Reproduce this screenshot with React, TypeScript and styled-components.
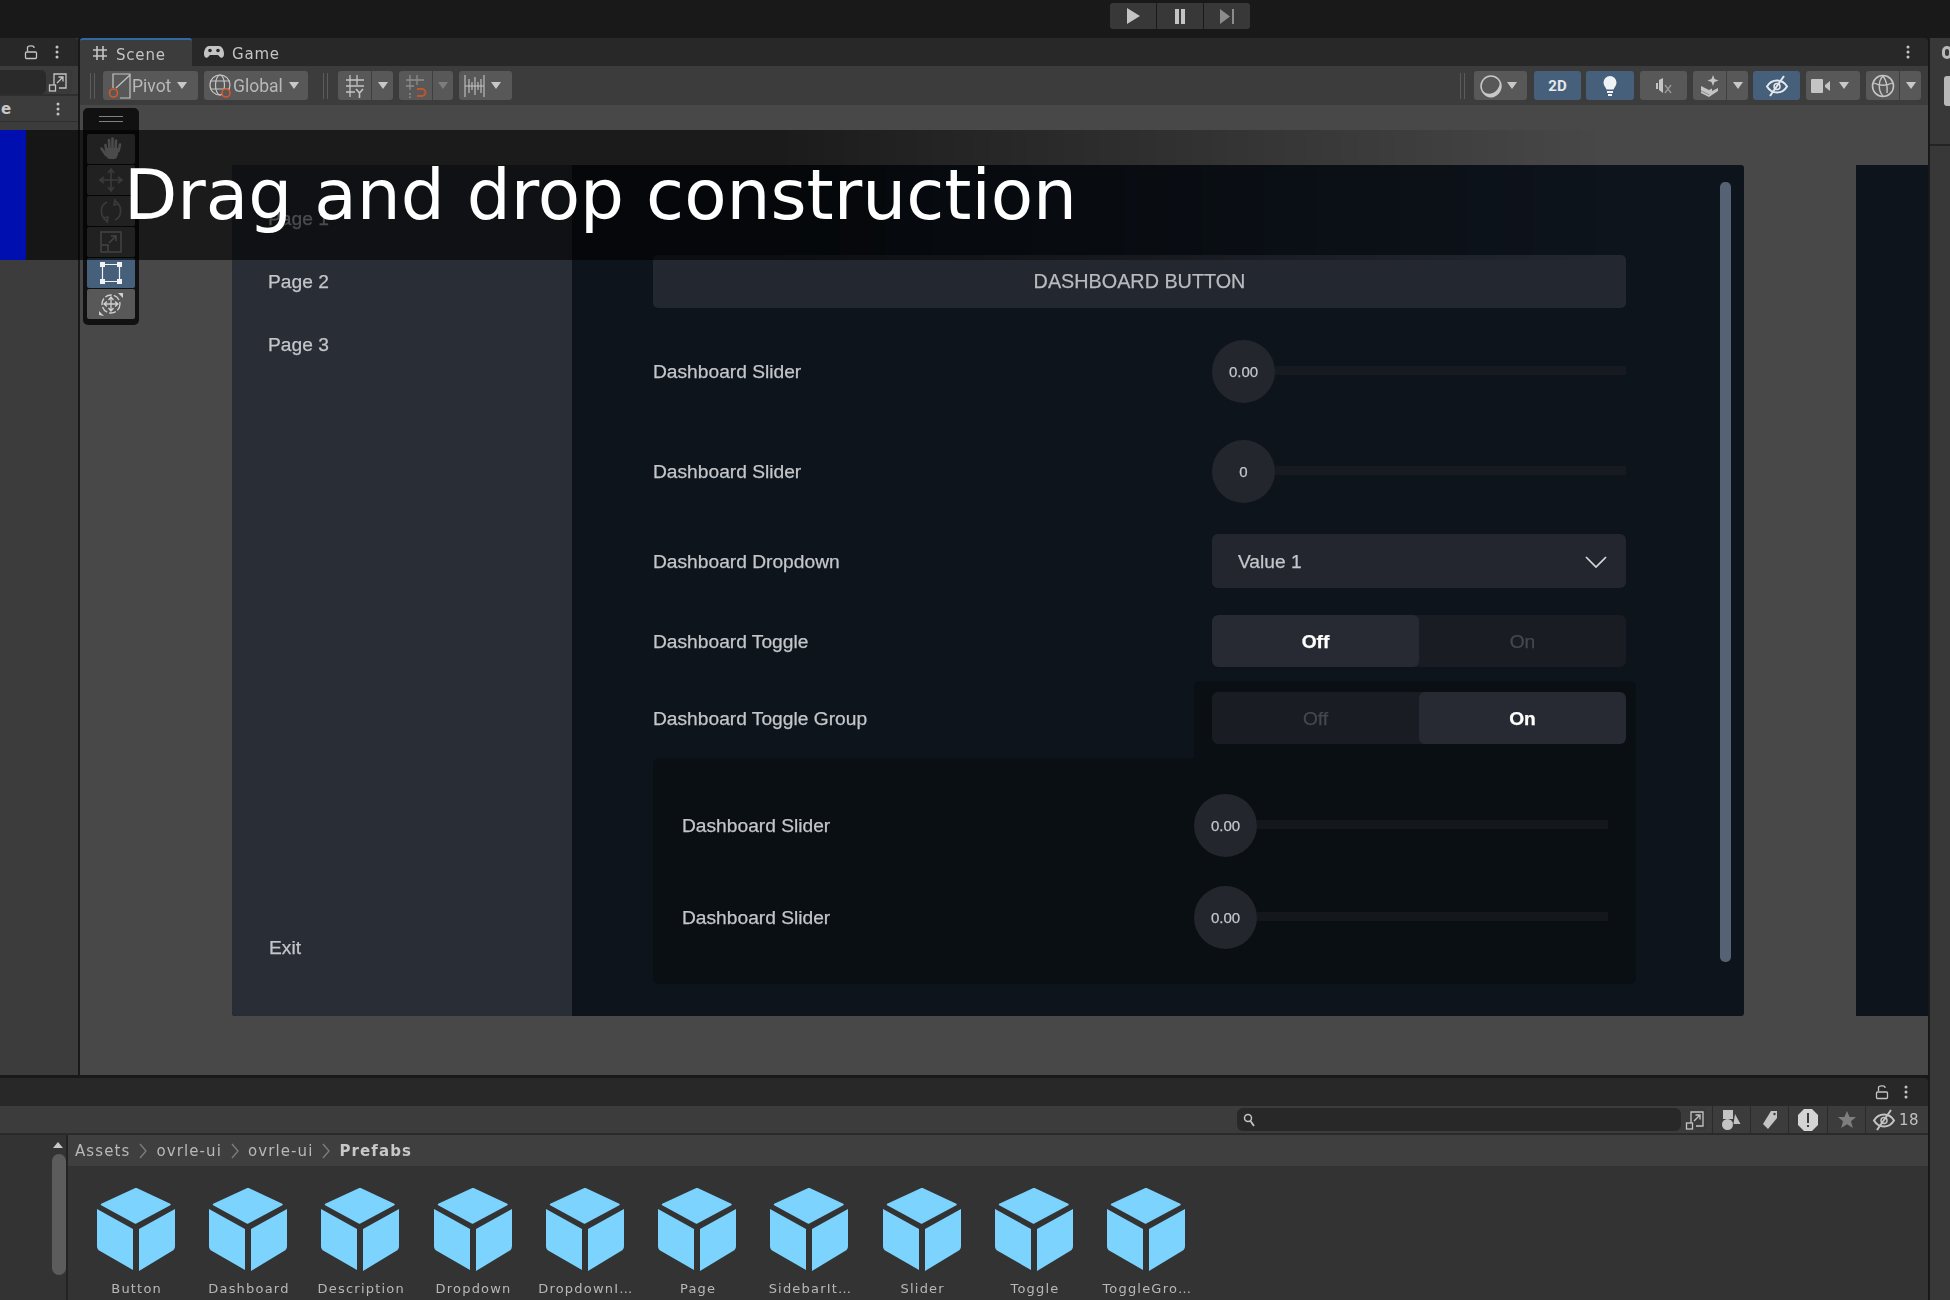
import React from 'react'
import styled, { createGlobalStyle } from 'styled-components'

const GlobalStyle = createGlobalStyle`
	html, body { margin: 0; padding: 0; background: #191919; }
	* { box-sizing: border-box; }
`

const PREFABS = ['Button', 'Dashboard', 'Description', 'Dropdown', 'DropdownI…', 'Page', 'SidebarIt…', 'Slider', 'Toggle', 'ToggleGro…']

const Glyph: React.FC<{ w: number; h?: number; view?: string; children: React.ReactNode }> = ({ w, h, view, children }) => (
	<svg width={w} height={h ?? w} viewBox={view ?? `0 0 ${w} ${h ?? w}`} fill="none" style={{ display: 'block', flex: 'none' }}>
		{children}
	</svg>
)

const LockIcon = () => (
	<Glyph w={14} h={16}>
		<path d="M3.5 7V3.5C3.5 1.5 10 1 10 3.5V4" stroke="#c4c4c4" strokeWidth="1.3" />
		<rect x="1.5" y="8" width="11" height="6.5" rx="1" stroke="#c4c4c4" strokeWidth="1.3" />
	</Glyph>
)

const KebabIcon = () => (
	<Glyph w={4} h={14}>
		<circle cx="2" cy="2" r="1.5" fill="#c4c4c4" />
		<circle cx="2" cy="7" r="1.5" fill="#c4c4c4" />
		<circle cx="2" cy="12" r="1.5" fill="#c4c4c4" />
	</Glyph>
)

const ExpandIcon = () => (
	<Glyph w={20} h={20}>
		<path d="M6 13V2h12v14H11" stroke="#c4c4c4" strokeWidth="1.3" />
		<rect x="1.5" y="13" width="6" height="6" stroke="#c4c4c4" strokeWidth="1.3" />
		<path d="M9 11l6-6M10.5 5H15v4.5" stroke="#c4c4c4" strokeWidth="1.3" />
	</Glyph>
)

const EyeSlashIcon: React.FC<{ color?: string }> = ({ color = '#e4e8ec' }) => (
	<Glyph w={24} h={22}>
		<path d="M2 11.5C5 6.5 9 5.5 12 5.5s7 1 10 6c-3 5-7 6-10 6s-7-1-10-6z" stroke={color} strokeWidth="2" />
		<circle cx="12" cy="11.5" r="3" stroke={color} strokeWidth="1.5" />
		<path d="M5 21L19 1" stroke={color} strokeWidth="2" />
	</Glyph>
)

const Page = styled.div`
	position: relative;
	width: 1950px;
	height: 1300px;
	overflow: hidden;
	background: #191919;
	font-family: "DejaVu Sans", sans-serif;
`

const Soft = styled.div`
	filter: blur(0.55px);
`

const TopBar = styled.div`
	height: 38px;
	display: flex;
	padding: 3px 0 0 1110px;
	gap: 1px;
	background: #191919;
`

const PlayButton = styled.div`
	width: 46px;
	height: 26px;
	background: #383838;
	display: flex;
	align-items: center;
	justify-content: center;
	&:first-child { border-radius: 3px 0 0 3px; }
	&:last-child { border-radius: 0 3px 3px 0; }
`

const Workspace = styled.div`
	display: flex;
	height: 1262px;
`

const MainColumn = styled.div`
	width: 1928px;
	display: flex;
	flex-direction: column;
`

const RightDock = styled.div`
	flex: 1;
	margin-left: 2px;
	background: #383838;
	border-radius: 4px 0 0 0;
	display: flex;
	flex-direction: column;
`

const DockHeader = styled.div`
	height: 108px;
	padding: 8px 0 0 12px;
	background: #383838;
	border-bottom: 2px solid #232323;
`

const DockMark = styled.div`
	width: 10px;
	height: 13px;
	border: 3px solid #b8b8b8;
	border-radius: 6px;
`

const DockThumb = styled.div`
	width: 12px;
	height: 30px;
	margin: 17px 0 0 2px;
	background: #b8b8b8;
	border-radius: 3px;
`

const UpperRow = styled.div`
	height: 1037px;
	display: flex;
`

const LeftSliver = styled.div`
	width: 78px;
	display: flex;
	flex-direction: column;
	background: #3c3c3c;
`

const PanelHeader = styled.div<{ $gap: number; $pad: number }>`
	height: 28px;
	flex: none;
	display: flex;
	align-items: center;
	justify-content: flex-end;
	gap: ${(p) => p.$gap}px;
	padding-right: ${(p) => p.$pad}px;
	background: #282828;
	border-radius: 0 4px 0 0;
`

const SliverSearch = styled.div`
	height: 30px;
	display: flex;
	align-items: flex-start;
	justify-content: flex-end;
	padding: 4px 6px 0 0;
	border-bottom: 2px solid #2e2e2e;
`

const SearchEnd = styled.div`
	width: 72px;
	height: 24px;
	background: #2a2a2a;
	border-radius: 0 5px 5px 0;
	display: flex;
	justify-content: flex-end;
	align-items: center;
	padding-right: 4px;
	box-shadow: inset -26px 0 0 #3a3a3a;
`

const SliverRow = styled.div`
	height: 26px;
	display: flex;
	align-items: center;
	justify-content: space-between;
	padding: 0 18px 0 1px;
	color: #c8c8c8;
	font-size: 15px;
	font-weight: bold;
	border-bottom: 1px solid #2e2e2e;
`

const Scene = styled.div`
	flex: 1;
	display: flex;
	flex-direction: column;
	margin-left: 2px;
	position: relative;
`

const SceneTabs = styled.div`
	height: 28px;
	flex: none;
	display: flex;
	background: #282828;
	border-radius: 4px 4px 0 0;
`

const SceneTab = styled.div<{ $active?: boolean; $width: number }>`
	width: ${(p) => p.$width}px;
	display: flex;
	align-items: center;
	gap: 8px;
	padding-left: 12px;
	background: ${(p) => (p.$active ? '#3c3c3c' : 'transparent')};
	border-top: ${(p) => (p.$active ? '2px solid #2f6aa5' : '0')};
	border-radius: 3px 3px 0 0;
	color: #c4c4c4;
	font-size: 15px;
	letter-spacing: 0.8px;
`

const TabText = styled.span`
	padding-top: 4px;
`

const TabSpacer = styled.div`
	flex: 1;
`

const TabKebab = styled.div`
	width: 22px;
	display: flex;
	align-items: center;
`

const SceneToolbar = styled.div`
	height: 39px;
	flex: none;
	display: flex;
	align-items: flex-start;
	padding: 5px 7px 0 10px;
	background: #3c3c3c;
`

const Grip = styled.div<{ $left?: number; $right?: number }>`
	width: 5px;
	height: 26px;
	margin: 2px ${(p) => p.$right ?? 0}px 0 ${(p) => p.$left ?? 0}px;
	border-left: 1px solid #5b5b5b;
	border-right: 1px solid #5b5b5b;
`

const ToolButton = styled.div<{ $width: number; $active?: boolean; $left?: number; $pad?: number }>`
	width: ${(p) => p.$width}px;
	height: 29px;
	margin-left: ${(p) => p.$left ?? 0}px;
	padding-left: ${(p) => p.$pad ?? 0}px;
	display: flex;
	align-items: center;
	justify-content: ${(p) => (p.$pad === undefined ? 'center' : 'flex-start')};
	flex: none;
	background: ${(p) => (p.$active ? '#46607c' : '#585858')};
	border-radius: 3px;
	color: #c4c4c4;
	font-size: 15px;
`

const ButtonText = styled.span`
	font-family: "Roboto", sans-serif;
	font-size: 17.5px;
	color: #b8b8b8;
	margin-right: 6px;
`

const TwoDLabel = styled.span`
	font-family: "Roboto", sans-serif;
	font-size: 15px;
	font-weight: 700;
	color: #e4e8ec;
`

const CaretGap = styled.span<{ $width: number }>`
	width: ${(p) => p.$width}px;
	flex: none;
`

const SplitPart = styled.div<{ $width: number }>`
	width: ${(p) => p.$width}px;
	height: 100%;
	display: flex;
	align-items: center;
	justify-content: center;
	flex: none;
	& + & { border-left: 1px solid #3f3f3f; }
`

const Caret = styled.span<{ $dim?: boolean }>`
	width: 0;
	height: 0;
	flex: none;
	border-left: 5.5px solid transparent;
	border-right: 5.5px solid transparent;
	border-top: 7px solid ${(p) => (p.$dim ? '#7d7d7d' : '#c8c8c8')};
`

const SceneView = styled.div`
	flex: 1;
	position: relative;
	display: flex;
	padding: 60px 0 59px 152px;
	background: #484848;
`

const ToolStrip = styled.div`
	position: absolute;
	left: 3px;
	top: 3px;
	width: 56px;
	height: 217px;
	padding: 8px 4px 0;
	background: #111;
	border-radius: 5px;
	display: flex;
	flex-direction: column;
	gap: 1px;
`

const StripHandle = styled.div`
	height: 6px;
	width: 24px;
	margin: 0 auto 11px;
	border-top: 1px solid #808080;
	border-bottom: 1px solid #808080;
`

const StripButton = styled.div<{ $active?: boolean }>`
	height: 30px;
	display: flex;
	align-items: center;
	justify-content: center;
	background: ${(p) => (p.$active ? '#46607c' : '#585858')};
	border-radius: 2px;
`

const Canvas = styled.div`
	width: 1512px;
	height: 851px;
	display: flex;
	position: relative;
	flex: none;
	background: #0e141c;
	border-radius: 3px;
	overflow: hidden;
	-webkit-text-stroke: 0.25px currentColor;
`

const CanvasPeek = styled.div`
	width: 72px;
	margin-left: 112px;
	flex: none;
	background: #0e141c;
`

const Sidebar = styled.div`
	width: 340px;
	flex: none;
	display: flex;
	flex-direction: column;
	padding: 22px 0 37px 36px;
	background: #292d36;
`

const SideLink = styled.div`
	height: 63px;
	display: flex;
	align-items: center;
	color: #c4c6c9;
	font-family: "Liberation Sans", sans-serif;
	font-size: 19.2px;
`

const SideExit = styled(SideLink)`
	margin-top: auto;
	padding-left: 1px;
`

const Content = styled.div`
	width: 973px;
	margin-left: 81px;
	padding-top: 90px;
`

const ScrollTrack = styled.div`
	position: absolute;
	left: 1488px;
	top: 17px;
	width: 11px;
	height: 780px;
	background: #556273;
	border-radius: 5px;
`

const WideButton = styled.div`
	height: 53px;
	display: flex;
	align-items: center;
	justify-content: center;
	background: #23272f;
	border-radius: 5px;
	color: #b9bbbf;
	font-family: "Liberation Sans", sans-serif;
	font-size: 19.8px;
`

const Row = styled.div<{ $top: number; $height: number }>`
	height: ${(p) => p.$height}px;
	margin-top: ${(p) => p.$top}px;
	display: flex;
	align-items: center;
`

const Label = styled.div<{ $width: number; $nudge?: number }>`
	width: ${(p) => p.$width}px;
	padding-top: ${(p) => p.$nudge ?? 0}px;
	flex: none;
	color: #c4c6c9;
	font-family: "Liberation Sans", sans-serif;
	font-size: 19.2px;
`

const Knob = styled.div`
	width: 63px;
	height: 63px;
	flex: none;
	border-radius: 50%;
	background: #24262e;
	display: flex;
	align-items: center;
	justify-content: center;
	color: #c4c6c9;
	font-family: "Liberation Sans", sans-serif;
	font-size: 15px;
`

const Track = styled.div<{ $tint: string; $width: number }>`
	width: ${(p) => p.$width}px;
	height: 9px;
	flex: none;
	margin-top: -2px;
	background: ${(p) => p.$tint};
`

const Dropdown = styled.div`
	width: 414px;
	height: 54px;
	display: flex;
	align-items: center;
	justify-content: space-between;
	padding: 2px 19px 0 26px;
	background: #23262f;
	border-radius: 6px;
	color: #c4c6c9;
	font-family: "Liberation Sans", sans-serif;
	font-size: 19.2px;
`

const Toggle = styled.div`
	width: 414px;
	height: 52px;
	display: flex;
	background: #191c23;
	border-radius: 6px;
	overflow: hidden;
`

const ToggleSide = styled.div<{ $on?: boolean }>`
	flex: 1;
	display: flex;
	align-items: center;
	justify-content: center;
	padding-top: 2px;
	background: ${(p) => (p.$on ? '#272a33' : 'transparent')};
	border-radius: 6px;
	color: ${(p) => (p.$on ? '#ffffff' : '#45484d')};
	font-family: "Liberation Sans", sans-serif;
	font-size: 19.2px;
	font-weight: ${(p) => (p.$on ? 700 : 400)};
`

const GroupHead = styled.div`
	width: 983px;
	height: 77px;
	margin-top: 14px;
	padding-bottom: 2px;
	display: flex;
	align-items: center;
`

const GroupTab = styled.div`
	width: 442px;
	height: 77px;
	flex: none;
	margin: 0 0 -2px auto;
	padding: 11px 0 0 18px;
	background: #0a0f13;
	border-radius: 6px 6px 0 0;
`

const GroupPanel = styled.div`
	width: 983px;
	height: 226px;
	padding: 36px 29px 0 29px;
	background: #0a0f13;
	border-radius: 6px 0 6px 6px;
`

const ProjectPanel = styled.div`
	flex: 1;
	margin-top: 3px;
	display: flex;
	flex-direction: column;
`

const ProjectToolbar = styled.div`
	height: 29px;
	flex: none;
	display: flex;
	align-items: center;
	justify-content: flex-end;
	padding-right: 3px;
	background: #3c3c3c;
	border-bottom: 2px solid #2a2a2a;
`

const SearchField = styled.div`
	width: 469px;
	height: 23px;
	margin-right: 6px;
	display: flex;
	align-items: center;
	justify-content: space-between;
	padding: 0 1px 0 6px;
	background: #282828;
	border-radius: 6px;
	box-shadow: inset -25px 0 0 #3a3a3a;
`

const FilterButton = styled.div<{ $width?: number }>`
	width: ${(p) => p.$width ?? 38}px;
	height: 27px;
	flex: none;
	display: flex;
	align-items: center;
	justify-content: center;
	gap: 3px;
	border-left: 1px solid #2a2a2a;
	color: #c0c0c0;
	font-size: 15px;
	letter-spacing: 0.5px;
`

const ProjectBody = styled.div`
	flex: 1;
	display: flex;
	background: #333;
	min-height: 0;
`

const TreeColumn = styled.div`
	width: 68px;
	flex: none;
	padding: 7px 0 0 52px;
	border-right: 2px solid #232323;
`

const ScrollUp = styled.div`
	width: 0;
	height: 0;
	margin-left: 1px;
	border-left: 5px solid transparent;
	border-right: 5px solid transparent;
	border-bottom: 6px solid #c8c8c8;
`

const ScrollThumb = styled.div`
	width: 14px;
	height: 121px;
	margin: 6px 0 0 0;
	background: #5c5c5c;
	border-radius: 7px;
`

const Browser = styled.div`
	flex: 1;
	display: flex;
	flex-direction: column;
`

const Breadcrumb = styled.div`
	height: 31px;
	flex: none;
	display: flex;
	align-items: center;
	gap: 9px;
	padding-left: 7px;
	background: #3f3f3f;
	color: #b8b8b8;
	font-size: 15px;
	letter-spacing: 1.1px;
`

const CrumbNow = styled.span`
	font-weight: bold;
	color: #c8c8c8;
`

const PrefabGrid = styled.div`
	display: flex;
	padding: 22px 0 0 11.5px;
`

const PrefabTile = styled.div`
	width: 112.3px;
	flex: none;
	display: flex;
	flex-direction: column;
	align-items: center;
	gap: 9px;
`

const PrefabName = styled.div`
	padding-left: 2px;
	color: #b8b8b8;
	font-size: 13px;
	letter-spacing: 1.2px;
	white-space: nowrap;
`

const Banner = styled.div`
	position: absolute;
	left: 0;
	top: 130px;
	width: 100%;
	height: 130px;
	display: flex;
	background: linear-gradient(90deg, rgba(0, 0, 0, 0.62) 0%, rgba(0, 0, 0, 0.62) 40%, rgba(0, 0, 0, 0) 82%);
`

const BannerEdge = styled.div`
	width: 26px;
	flex: none;
	background: #0010b0;
`

const BannerTitle = styled.h1`
	margin: 0;
	padding: 23px 0 0 98px;
	color: #fff;
	font-family: "DejaVu Sans", sans-serif;
	font-size: 69.3px;
	font-weight: 400;
	line-height: 84px;
	white-space: nowrap;
`

const CubeIcon = () => (
	<Glyph w={78} h={84}>
		<path d="M39 0.500L73 16.500 38.500 35 4.500 16.500z" fill="#7cd3fd" stroke="#7cd3fd" strokeWidth="1.5" strokeLinejoin="round" />
		<path d="M0 21L36 41V82L3 63Q0 61.500 0 58z" fill="#7cd3fd" />
		<path d="M78 21L42 41V83L75 63Q78 61.500 78 58z" fill="#7cd3fd" />
	</Glyph>
)

const SliderRow: React.FC<{ label: string; value: string; labelWidth: number; trackWidth: number; tint: string; top: number }> = ({ label, value, labelWidth, trackWidth, tint, top }) => (
	<Row $top={top} $height={63}>
		<Label $width={labelWidth}>{label}</Label>
		<Knob>{value}</Knob>
		<Track $tint={tint} $width={trackWidth} />
	</Row>
)

const App: React.FC = () => {
	return (
		<Page>
			<GlobalStyle />
			<Soft>
				<TopBar>
					<PlayButton>
						<Glyph w={14} h={16}><path d="M1 0L14 8 1 16z" fill="#c4c4c4" /></Glyph>
					</PlayButton>
					<PlayButton>
						<Glyph w={12} h={15}><path d="M1 0h4v15H1zM7 0h4v15H7z" fill="#c4c4c4" /></Glyph>
					</PlayButton>
					<PlayButton>
						<Glyph w={15} h={15}><path d="M0 0L10 7.5 0 15z M12 0h2v15h-2z" fill="#8c8c8c" /></Glyph>
					</PlayButton>
				</TopBar>
				<Workspace>
					<MainColumn>
						<UpperRow>
							<LeftSliver>
								<PanelHeader $gap={17} $pad={19}><LockIcon /><KebabIcon /></PanelHeader>
								<SliverSearch>
									<SearchEnd><ExpandIcon /></SearchEnd>
								</SliverSearch>
								<SliverRow>e<KebabIcon /></SliverRow>
							</LeftSliver>
							<Scene>
								<SceneTabs>
									<SceneTab $active $width={112}>
										<Glyph w={16}><path d="M5 1v14M11 1v14M1 5h14M1 11h14" stroke="#c4c4c4" strokeWidth="1.6" /></Glyph>
										<TabText>Scene</TabText>
									</SceneTab>
									<SceneTab $width={98}>
										<Glyph w={20} h={14}>
											<path d="M5 1h10c3 0 5 4 5 8 0 4-3 5-5 2l-1-1H6l-1 1c-2 3-5 2-5-2 0-4 2-8 5-8z" fill="#c4c4c4" />
											<circle cx="6" cy="5.5" r="1.8" fill="#282828" />
											<circle cx="14" cy="5.5" r="1.8" fill="#282828" />
										</Glyph>
										<TabText>Game</TabText>
									</SceneTab>
									<TabSpacer />
									<TabKebab><KebabIcon /></TabKebab>
								</SceneTabs>
								<SceneToolbar>
									<Grip $right={8} />
									<ToolButton $width={95} $pad={5}>
										<Glyph w={24} h={26}>
											<path d="M5 15V1h17v24H12" stroke="#c4c4c4" strokeWidth="1.2" />
											<path d="M8 15L22 2" stroke="#c4c4c4" strokeWidth="1.2" />
											<circle cx="5.5" cy="20" r="4" stroke="#d8572b" strokeWidth="1.6" />
										</Glyph>
										<ButtonText>Pivot</ButtonText>
										<Caret />
									</ToolButton>
									<ToolButton $width={104} $left={6} $pad={5}>
										<Glyph w={24} h={26}>
											<circle cx="11" cy="12" r="10" stroke="#c4c4c4" strokeWidth="1.2" />
											<ellipse cx="11" cy="12" rx="4.5" ry="10" stroke="#c4c4c4" strokeWidth="1.2" />
											<path d="M1 8h20M1 16h20" stroke="#c4c4c4" strokeWidth="1.2" />
											<circle cx="17" cy="20" r="4" fill="#585858" stroke="#d8572b" strokeWidth="1.6" />
										</Glyph>
										<ButtonText>Global</ButtonText>
										<Caret />
									</ToolButton>
									<Grip $left={15} $right={10} />
									<ToolButton $width={55}>
										<SplitPart $width={33}>
											<Glyph w={20} h={24}>
												<path d="M5 1v22M12 1v10M1 6h18M1 12h18M1 18h9" stroke="#c4c4c4" strokeWidth="1.3" />
												<path d="M11 15l3.5 4 3.5-4M14.5 19v5" stroke="#c4c4c4" strokeWidth="1.6" />
											</Glyph>
										</SplitPart>
										<SplitPart $width={22}><Caret /></SplitPart>
									</ToolButton>
									<ToolButton $width={54} $left={6}>
										<SplitPart $width={33}>
											<Glyph w={22} h={24}>
												<path d="M5 1v15M12 1v10M1 6h18M1 12h8" stroke="#8d8d8d" strokeWidth="1.3" />
												<path d="M12 15h5a3.5 3.5 0 010 7h-5" stroke="#c2552f" strokeWidth="1.8" />
												<path d="M5 19v5" stroke="#8d8d8d" strokeWidth="1.5" strokeDasharray="2 1.5" />
											</Glyph>
										</SplitPart>
										<SplitPart $width={21}><Caret $dim /></SplitPart>
									</ToolButton>
									<ToolButton $width={53} $left={6} $pad={5}>
										<Glyph w={22} h={24}>
											<path d="M1 1v22M20 1v22M1 12h19M5 5v14M8 8v8M11 3v18M14 8v8M17 5v14" stroke="#c4c4c4" strokeWidth="1.1" />
										</Glyph>
										<CaretGap $width={5} />
										<Caret />
									</ToolButton>
									<TabSpacer />
									<Grip $right={9} />
									<ToolButton $width={53} $pad={6}>
										<Glyph w={22} h={24}>
											<circle cx="11" cy="12" r="10" stroke="#c8c8c8" strokeWidth="1.5" />
											<path d="M2 17C9 23 19 19 20 8C23 17 17 24 10 23.5C6 23 4 21 2 17z" fill="#c8c8c8" />
										</Glyph>
										<CaretGap $width={5} />
										<Caret />
									</ToolButton>
									<ToolButton $width={47} $left={7} $active><TwoDLabel>2D</TwoDLabel></ToolButton>
									<ToolButton $width={48} $left={5} $active>
										<Glyph w={14} h={22}>
											<path d="M7 1a6.500 6.500 0 00-6.500 6.500c0 3 2 4.500 3 7h7c1-2.500 3-4 3-7A6.500 6.500 0 007 1z" fill="#f0f3f6" />
											<path d="M4 16h6v2H4zM5 19h4v2H5z" fill="#f0f3f6" />
										</Glyph>
									</ToolButton>
									<ToolButton $width={47} $left={6}>
										<Glyph w={18} h={20}>
											<path d="M1 7h2v6H1zM4 4l4-2v15l-4-3z" fill="#c4c4c4" />
											<path d="M10 9l6 8M16 9l-6 8" stroke="#9a9a9a" strokeWidth="1.3" />
										</Glyph>
									</ToolButton>
									<ToolButton $width={55} $left={6}>
										<SplitPart $width={33}>
											<Glyph w={20} h={24}>
												<path d="M13 1l1.500 4 4 1.500-4 1.500-1.500 4-1.500-4-4-1.500 4-1.500z" fill="#c4c4c4" />
												<path d="M1 12l8 4 3-1.500V19l-3 1.500-8-4zM12 17l6-3v3l-9 6-8-4v-2l8 4z" fill="#c4c4c4" />
											</Glyph>
										</SplitPart>
										<SplitPart $width={22}><Caret /></SplitPart>
									</ToolButton>
									<ToolButton $width={47} $left={5} $active><EyeSlashIcon /></ToolButton>
									<ToolButton $width={54} $left={6} $pad={5}>
										<Glyph w={20} h={16}>
											<rect x="0" y="1" width="12" height="14" rx="1" fill="#c4c4c4" />
											<path d="M14 7l5-4v10l-5-4z" fill="#c4c4c4" />
										</Glyph>
										<CaretGap $width={8} />
										<Caret />
									</ToolButton>
									<ToolButton $width={55} $left={6}>
										<SplitPart $width={33}>
											<Glyph w={24} h={26}>
												<circle cx="12" cy="13" r="10.500" stroke="#c4c4c4" strokeWidth="1.6" />
												<path d="M3 10c5 3 13 3 18 0M12 3c-5 5-5 15 0 20M12 3c3 4 5 8 4 17" stroke="#c4c4c4" strokeWidth="1.4" />
											</Glyph>
										</SplitPart>
										<SplitPart $width={22}><Caret /></SplitPart>
									</ToolButton>
								</SceneToolbar>
								<SceneView>
									<Canvas>
										<Sidebar>
											<SideLink>Page 1</SideLink>
											<SideLink>Page 2</SideLink>
											<SideLink>Page 3</SideLink>
											<SideExit>Exit</SideExit>
										</Sidebar>
										<Content>
											<WideButton>DASHBOARD BUTTON</WideButton>
											<SliderRow label="Dashboard Slider" value="0.00" labelWidth={559} trackWidth={351} tint="#171a21" top={32} />
											<SliderRow label="Dashboard Slider" value="0" labelWidth={559} trackWidth={351} tint="#171a21" top={37} />
											<Row $top={31} $height={54}>
												<Label $width={559} $nudge={2}>Dashboard Dropdown</Label>
												<Dropdown>
													Value 1
													<Glyph w={22} h={12}><path d="M1 1l10 10L21 1" stroke="#d8d8d8" strokeWidth="1.7" /></Glyph>
												</Dropdown>
											</Row>
											<Row $top={27} $height={52}>
												<Label $width={559} $nudge={2}>Dashboard Toggle</Label>
												<Toggle>
													<ToggleSide $on>Off</ToggleSide>
													<ToggleSide>On</ToggleSide>
												</Toggle>
											</Row>
											<GroupHead>
												<Label $width={400}>Dashboard Toggle Group</Label>
												<GroupTab>
													<Toggle>
														<ToggleSide>Off</ToggleSide>
														<ToggleSide $on>On</ToggleSide>
													</Toggle>
												</GroupTab>
											</GroupHead>
											<GroupPanel>
												<SliderRow label="Dashboard Slider" value="0.00" labelWidth={512} trackWidth={351} tint="#14171b" top={0} />
												<SliderRow label="Dashboard Slider" value="0.00" labelWidth={512} trackWidth={351} tint="#14171b" top={29} />
											</GroupPanel>
										</Content>
										<ScrollTrack />
									</Canvas>
									<CanvasPeek />
									<ToolStrip>
										<StripHandle />
										<StripButton>
											<Glyph w={24} h={26}>
												<path d="M6.500 9l1 7M10 4l.5 9M13.500 2.500V13M17 4.500L16.500 14M21 8.500L19.500 15" stroke="#c4c4c4" strokeWidth="2.600" strokeLinecap="round" />
												<path d="M2.500 12.500L7 19" stroke="#c4c4c4" strokeWidth="2.600" strokeLinecap="round" />
												<path d="M7 12h13l-1 6c-.5 3-2 5-4 5h-4c-2 0-3-1-4-3z" fill="#c4c4c4" />
											</Glyph>
										</StripButton>
										<StripButton>
											<Glyph w={26} h={26}>
												<path d="M13 3v20M3 13h20M10 6l3-4 3 4M10 20l3 4 3-4M6 10l-4 3 4 3M20 10l4 3-4 3" stroke="#9a9a9a" strokeWidth="1.6" />
											</Glyph>
										</StripButton>
										<StripButton>
											<Glyph w={24} h={26}>
												<path d="M8 23C0 18 1 7 8 4M16 3c8 5 7 16 0 19" stroke="#9a9a9a" strokeWidth="1.6" />
												<path d="M16 1l-1 6 5-1M8 25l1-6-5 1" stroke="#9a9a9a" strokeWidth="1.6" />
											</Glyph>
										</StripButton>
										<StripButton>
											<Glyph w={22} h={22}>
												<path d="M1 13V1h20v20H9" stroke="#b0b0b0" strokeWidth="1.5" />
												<rect x="1" y="14" width="7" height="7" stroke="#b0b0b0" strokeWidth="1.5" />
												<path d="M9 12l7-7M11 5h5v5" stroke="#b0b0b0" strokeWidth="1.5" />
											</Glyph>
										</StripButton>
										<StripButton $active>
											<Glyph w={22} h={22}>
												<path d="M5 2.500h12M5 19.500h12M2.500 5v12M19.500 5v12" stroke="#f0f3f6" strokeWidth="1.2" />
												<path d="M0 0h5v5H0zM17 0h5v5h-5zM0 17h5v5H0zM17 17h5v5h-5z" fill="#f0f3f6" />
											</Glyph>
										</StripButton>
										<StripButton>
											<Glyph w={24} h={24}>
												<circle cx="12" cy="12" r="9" stroke="#d0d0d0" strokeWidth="1.3" strokeDasharray="7 2" />
												<path d="M12 5v14M5 12h14M9.500 8L12 5l2.500 3M9.500 16l2.500 3 2.500-3M8 9.500L5 12l3 2.500M16 9.500l3 2.500-3 2.500" stroke="#d0d0d0" strokeWidth="1.3" />
												<path d="M19 1h5v5zM0 23l5 1-5-5z" fill="#d0d0d0" />
											</Glyph>
										</StripButton>
									</ToolStrip>
								</SceneView>
							</Scene>
						</UpperRow>
						<ProjectPanel>
							<PanelHeader $gap={15} $pad={20}><LockIcon /><KebabIcon /></PanelHeader>
							<ProjectToolbar>
								<SearchField>
									<Glyph w={12} h={14}>
										<circle cx="5" cy="5" r="3.500" stroke="#c4c4c4" strokeWidth="1.5" />
										<path d="M7.500 8l3.500 5" stroke="#c4c4c4" strokeWidth="1.8" />
									</Glyph>
									<ExpandIcon />
								</SearchField>
								<FilterButton>
									<Glyph w={19} h={20}>
										<rect x="1" y="0" width="10" height="9" fill="#c4c4c4" />
										<circle cx="5.500" cy="14.500" r="5.500" fill="#c4c4c4" />
										<path d="M13 4l5.500 10H11.500z" fill="#c4c4c4" />
									</Glyph>
								</FilterButton>
								<FilterButton>
									<Glyph w={16} h={20}>
										<path d="M9 1h6v7L6 19l-5-5z" fill="#c4c4c4" />
										<circle cx="12.500" cy="4" r="1.200" fill="#3c3c3c" />
									</Glyph>
								</FilterButton>
								<FilterButton $width={39}>
									<Glyph w={20} h={22}>
										<path d="M6 0h8l6 6v10l-6 6H6l-6-6V6z" fill="#d4d4d4" />
										<path d="M9 4h2v10H9zM9 16h2v2H9z" fill="#3c3c3c" />
									</Glyph>
								</FilterButton>
								<FilterButton>
									<Glyph w={18} h={17}>
										<path d="M9 0l2.600 6H18l-5 4.300L14.800 17 9 13.300 3.200 17 5 10.300 0 6h6.400z" fill="#7e7e7e" />
									</Glyph>
								</FilterButton>
								<FilterButton $width={60}>
									<EyeSlashIcon color="#c4c4c4" />
									18
								</FilterButton>
							</ProjectToolbar>
							<ProjectBody>
								<TreeColumn>
									<ScrollUp />
									<ScrollThumb />
								</TreeColumn>
								<Browser>
									<Breadcrumb>
										Assets
										<Glyph w={8} h={16}><path d="M1 1l6 7-6 7" stroke="#7e7e7e" strokeWidth="1.3" /></Glyph>
										ovrle-ui
										<Glyph w={8} h={16}><path d="M1 1l6 7-6 7" stroke="#7e7e7e" strokeWidth="1.3" /></Glyph>
										ovrle-ui
										<Glyph w={8} h={16}><path d="M1 1l6 7-6 7" stroke="#7e7e7e" strokeWidth="1.3" /></Glyph>
										<CrumbNow>Prefabs</CrumbNow>
									</Breadcrumb>
									<PrefabGrid>
										{PREFABS.map((name) => (
											<PrefabTile key={name}>
												<CubeIcon />
												<PrefabName>{name}</PrefabName>
											</PrefabTile>
										))}
									</PrefabGrid>
								</Browser>
							</ProjectBody>
						</ProjectPanel>
					</MainColumn>
					<RightDock>
						<DockHeader>
							<DockMark />
							<DockThumb />
						</DockHeader>
					</RightDock>
				</Workspace>
			</Soft>
			<Banner>
				<BannerEdge />
				<BannerTitle>Drag and drop construction</BannerTitle>
			</Banner>
		</Page>
	)
}

export default App
